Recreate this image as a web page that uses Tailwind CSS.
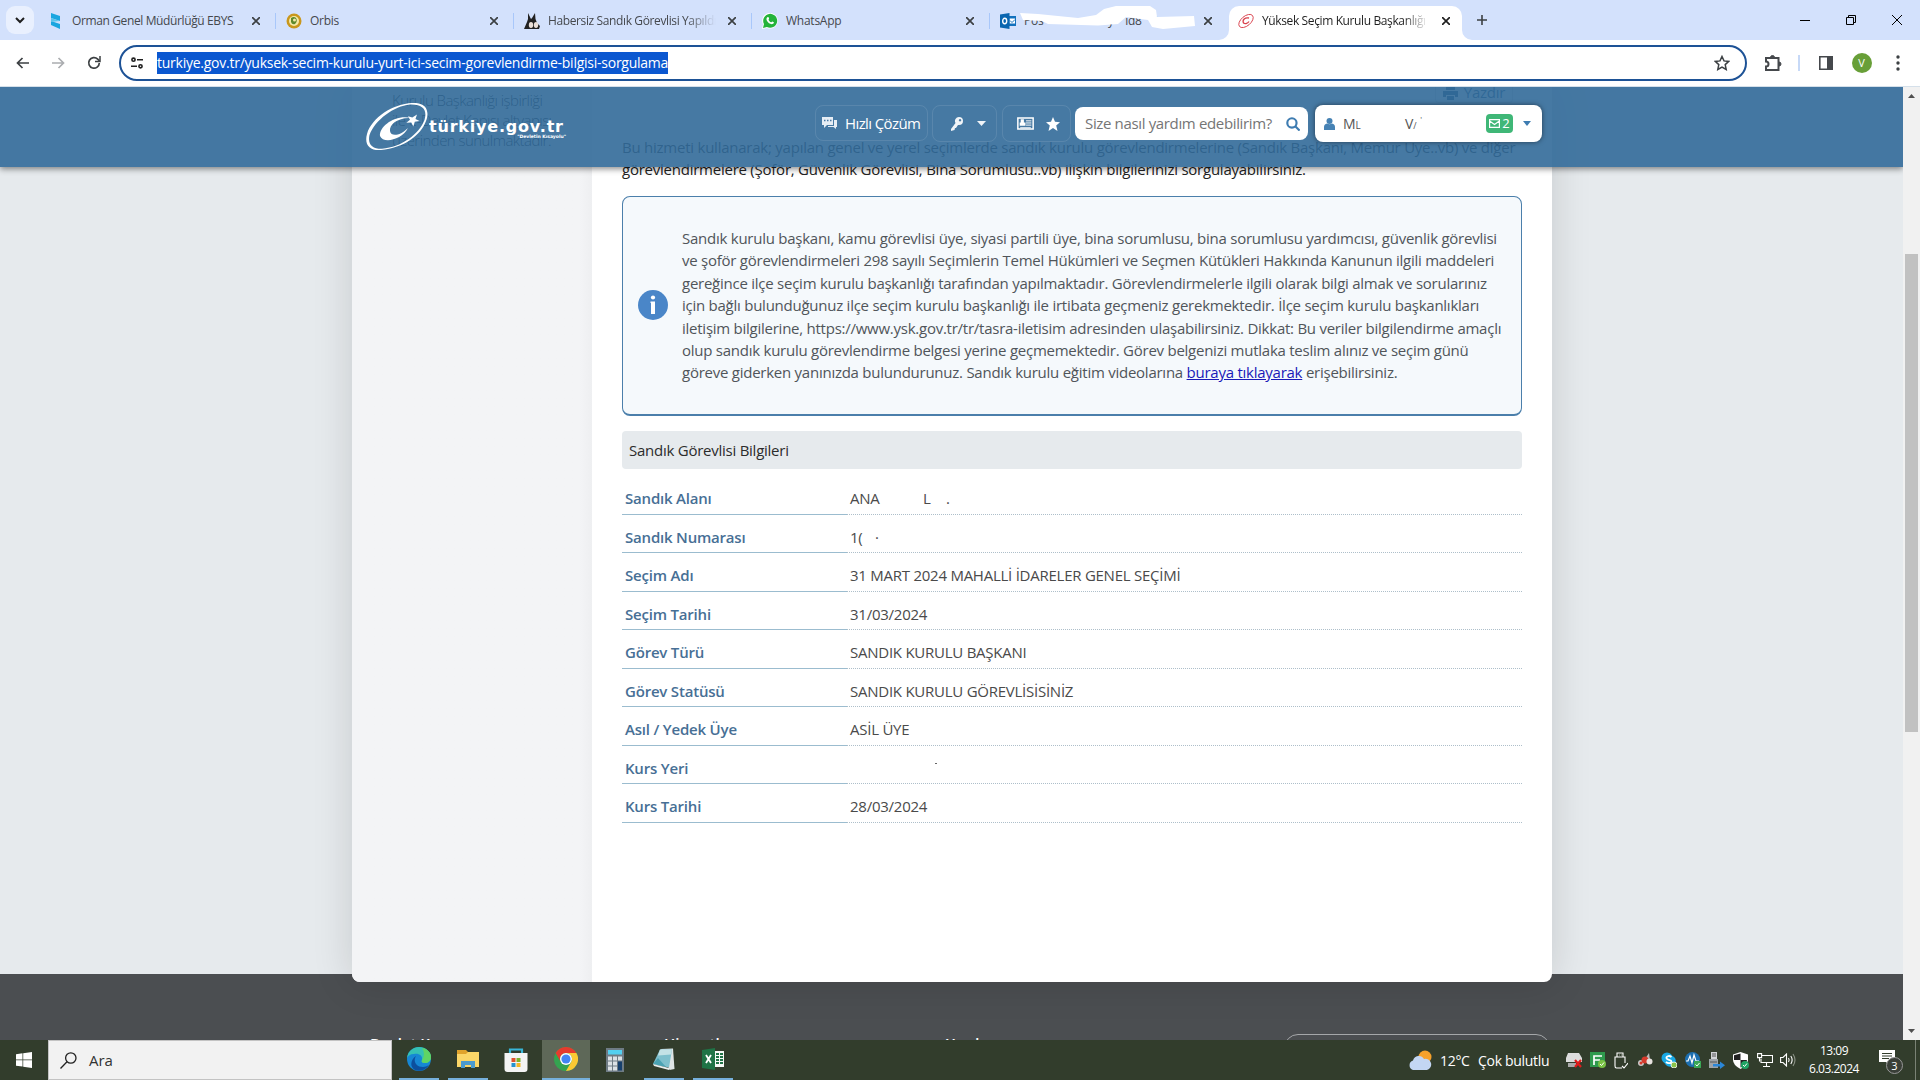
<!DOCTYPE html>
<html lang="tr">
<head>
  <meta charset="UTF-8">
  <meta name="viewport" content="width=device-width, initial-scale=1.0">
  <title>Yüksek Seçim Kurulu Başkanlığı</title>
  <script src="https://cdn.jsdelivr.net/npm/@tailwindcss/browser@4"></script>
</head>
<body class="w-[1920px] h-[1080px] overflow-hidden flex flex-col bg-white font-['Open_Sans',sans-serif]">

  <!-- Tab strip -->
  <div class="h-10 shrink-0 bg-[#d3e1fc] flex items-end pl-1.5 text-[12px] tracking-[-0.25px] text-[#45484d]">
    <div class="w-7 h-7 mb-1.5 rounded-[9px] bg-[#e9f0fe] flex items-center justify-center">
      <svg class="w-3 h-3" viewBox="0 0 12 12" fill="none" stroke="#1f1f1f" stroke-width="2"><path d="M2 4l4 4 4-4"/></svg>
    </div>
    <div class="w-[241px] h-[34px] pl-4 pr-[14px] pb-1 flex items-center">
      <svg class="w-3 h-4 mr-2.5" viewBox="0 0 12 16"><path d="M1 0l9 3v5L1 5z" fill="#1aa6e0"/><path d="M1 8l9 3v5L1 12z" fill="#1aa6e0"/><path d="M1 5l9 3-9 1z" fill="#5cc3ea"/></svg>
      <span class="flex-1 whitespace-nowrap tracking-[-0.38px]">Orman Genel Müdürlüğü EBYS</span>
      <svg class="w-2 h-2 ml-3 mr-[1px]" viewBox="0 0 8 8" stroke="#3c4043" stroke-width="1.7"><path d="M0 0l8 8M8 0L0 8"/></svg>
    </div>
    <div class="w-[238px] h-[34px] pb-1 flex items-center">
      <span class="w-[1px] h-4 bg-[#a8c7fa] mr-2.5"></span>
      <svg class="w-4 h-4 mr-2" viewBox="0 0 16 16"><circle cx="8" cy="8" r="7.5" fill="#c9971c"/><circle cx="8" cy="8" r="5" fill="#f4e9a8"/><path d="M5 5q3-2 5 0 2 3-1 6-3 1-4-2z" fill="#5d8a2c"/><circle cx="8.500" cy="7" r="1.500" fill="#f4e9a8"/></svg>
      <span class="flex-1">Orbis</span>
      <svg class="w-2 h-2 mr-[15px]" viewBox="0 0 8 8" stroke="#3c4043" stroke-width="1.7"><path d="M0 0l8 8M8 0L0 8"/></svg>
    </div>
    <div class="w-[238px] h-[34px] pb-1 flex items-center">
      <span class="w-[1px] h-4 bg-[#a8c7fa] mr-2.5"></span>
      <svg class="w-4 h-4 mr-2" viewBox="0 0 16 16"><path d="M4 0l3 6 1-1 3-5 .5 6 1.500 4 3 3-1 3H0l3-7 1-3z" fill="#222"/><ellipse cx="7" cy="12" rx="2.200" ry="3" fill="#eadfd8"/><ellipse cx="12" cy="12" rx="2.200" ry="3" fill="#eadfd8"/></svg>
      <span class="w-[168px] whitespace-nowrap overflow-hidden tracking-[-0.38px] [mask-image:linear-gradient(to_right,black_82%,transparent)]">Habersiz Sandık Görevlisi Yapıldı</span>
      <svg class="w-2 h-2 ml-3" viewBox="0 0 8 8" stroke="#3c4043" stroke-width="1.7"><path d="M0 0l8 8M8 0L0 8"/></svg>
    </div>
    <div class="w-[238px] h-[34px] pb-1 flex items-center">
      <span class="w-[1px] h-4 bg-[#a8c7fa] mr-2.5"></span>
      <svg class="w-4 h-4 mr-2" viewBox="0 0 16 16"><path d="M0 16l1-4.700A7.800 7.800 0 1 1 5 15z" fill="#fff"/><path d="M1 15l1-3.900a7 7 0 1 1 2.900 2.900z" fill="#23b33a"/><path d="M5.400 4.300c1-.7 1.300 0 1.700 1.300.1.600-.7.900-.5 1.300.7 1.200 1.400 1.800 2.500 2.300.5.100.8-1 1.200-.8 1.700.7 1.800.9 1.500 1.600-.6 1.200-2 1.400-3.500.8C6.500 10 5.300 8.700 4.700 7.200c-.4-1-.2-2.200.7-2.900z" fill="#fff"/></svg>
      <span class="flex-1">WhatsApp</span>
      <svg class="w-2 h-2 mr-[15px]" viewBox="0 0 8 8" stroke="#3c4043" stroke-width="1.7"><path d="M0 0l8 8M8 0L0 8"/></svg>
    </div>
    <div class="relative w-[240px] h-[34px] pb-1 flex items-center">
      <span class="w-[1px] h-4 bg-[#a8c7fa] mr-2.5"></span>
      <svg class="w-4 h-4 mr-2" viewBox="0 0 16 16"><path d="M8 3h8v10H8z" fill="#1271bd"/><path d="M9.500 5.500h5.500v5H9.500z" fill="#fff"/><path d="M10 7.500l2 2 3-3" stroke="#1271bd" fill="none"/><path d="M0 1.500L9.500 0v16L0 14.500z" fill="#0a66b0"/><ellipse cx="4.700" cy="8" rx="2" ry="2.700" fill="none" stroke="#fff" stroke-width="1.400"/></svg>
      <span class="w-[84px]">Pos</span>
      <span class="flex-1 whitespace-nowrap">y &nbsp; &nbsp;ıd8 &nbsp; D</span>
      <svg class="w-2 h-2 mr-[17px]" viewBox="0 0 8 8" stroke="#3c4043" stroke-width="1.7"><path d="M0 0l8 8M8 0L0 8"/></svg>
      <!-- white scribble over the title -->
      <svg class="absolute left-[29px] top-0 w-[180px] h-[25px]" viewBox="0 0 180 25"><path d="M2 7L20 8L60 12L78 9L86 3L98 0L132 0L138 4L139 11L176 10L177 20L145 23L134 21L130 14L108 11L100 18L80 19.500L30 18L24 15L5 14z" fill="#fff"/></svg>
    </div>
    <!-- active tab -->
    <div class="relative w-[233px] h-[34px] pb-1 pl-[9px] flex items-center bg-white rounded-t-[10px] text-[#1f1f1f]">
      <svg class="absolute -left-2.5 bottom-0 w-2.5 h-2.5" viewBox="0 0 10 10"><path d="M10 0v10H0A10 10 0 0 0 10 0z" fill="#fff"/></svg>
      <svg class="absolute -right-2.5 bottom-0 w-2.5 h-2.5" viewBox="0 0 10 10"><path d="M0 0v10h10A10 10 0 0 1 0 0z" fill="#fff"/></svg>
      <svg class="w-4 h-4 mr-2" viewBox="0 0 16 16" fill="none" stroke="#d9424d"><ellipse cx="8" cy="8" rx="8.500" ry="4.800" transform="rotate(-40 8 8)" stroke-width=".9"/><path d="M11 5C7 4 4 7 5.500 10c2 1.500 4.500 0 5.500-1.500" stroke-width="1.300"/></svg>
      <span class="w-[166px] whitespace-nowrap overflow-hidden tracking-[-0.38px] [mask-image:linear-gradient(to_right,black_85%,transparent)]">Yüksek Seçim Kurulu Başkanlığı</span>
      <svg class="w-2 h-2 ml-3.5" viewBox="0 0 8 8" stroke="#1f1f1f" stroke-width="1.700"><path d="M0 0l8 8M8 0L0 8"/></svg>
    </div>
    <div class="flex-1 h-10 pl-[15px] flex items-center">
      <svg class="w-2.5 h-2.5" viewBox="0 0 10 10" stroke="#3c4043" stroke-width="1.6"><path d="M5 0v10M0 5h10"/></svg>
      <svg class="w-2.5 h-2.5 ml-auto mr-9" viewBox="0 0 10 10" stroke="#000"><path d="M0 5.500h10"/></svg>
      <svg class="w-2.5 h-2.5 mr-9" viewBox="0 0 10 10" fill="none" stroke="#000"><path d="M.5 2.500h7v7h-7zM2.500 2.500v-2h7v7h-2"/></svg>
      <svg class="w-2.5 h-2.5 mr-[18px]" viewBox="0 0 10 10" stroke="#000"><path d="M0 0l10 10M10 0L0 10"/></svg>
    </div>
  </div>

  <!-- Address bar -->
  <div class="h-[47px] shrink-0 border-b border-[#d5e0ea] bg-white flex items-center pl-4 pr-5">
    <svg class="w-[13px] h-3 mr-[23px] shrink-0" viewBox="0 0 13 12" fill="none" stroke="#3c4043" stroke-width="1.700"><path d="M13 6H1.500M6.500 1l-5 5 5 5"/></svg>
    <svg class="w-[13px] h-3 mr-[22px] shrink-0" viewBox="0 0 13 12" fill="none" stroke="#abadb0" stroke-width="1.700"><path d="M0 6h11.500M6.500 1l5 5-5 5"/></svg>
    <svg class="w-[14px] h-[14px] mr-[18px] shrink-0" viewBox="0 0 14 14" fill="none" stroke="#3c4043" stroke-width="1.700"><path d="M12.300 7a5.300 5.300 0 1 1-1.600-3.900L12.500 5"/><path d="M13 0v5.500H8" stroke-width="1.500"/></svg>
    <div class="w-[1628px] shrink-0 h-9 rounded-full border-2 border-[#1d5296] flex items-center pl-2.5 pr-[15px]">
      <svg class="w-3 h-3 mr-3.5" viewBox="0 0 12 12" fill="none" stroke="#1f1f1f" stroke-width="1.600"><circle cx="2.500" cy="2.700" r="1.600"/><path d="M6 2.700h6M0 9.300h6"/><circle cx="9.500" cy="9.300" r="1.600"/></svg>
      <span class="h-[22px] leading-[22px] bg-[#0b57d0] text-white text-[14px] tracking-[-0.25px] whitespace-nowrap">turkiye.gov.tr/yuksek-secim-kurulu-yurt-ici-secim-gorevlendirme-bilgisi-sorgulama</span>
      <svg class="w-4 h-4 ml-auto" viewBox="0 0 16 16" fill="none" stroke="#3c4043" stroke-width="1.500"><path d="M8 1.500l2 4.400 4.800.5-3.600 3.200 1 4.800L8 12l-4.200 2.400 1-4.800L1.200 6.400 6 5.900z"/></svg>
    </div>
    <svg class="w-[18px] h-[18px] ml-[17px]" viewBox="0 0 18 18" fill="none" stroke="#45484c" stroke-width="2"><path d="M2 4h12.500v12H2v-3.500a2.500 2.500 0 0 0 0-5z"/><path d="M6.500 3.500a2 2 0 0 1 4 0zM15 8a2 2 0 0 1 0 4z" fill="#45484c" stroke-width="1"/></svg>
    <span class="w-[1.500px] h-4 ml-4 bg-[#c7d9f7]"></span>
    <svg class="w-4 h-4 ml-[18px]" viewBox="0 0 16 16"><path d="M1.800 1.800h12.400v12.400H1.800z" fill="none" stroke="#45484c" stroke-width="1.600"/><path d="M9 1h6v14H9z" fill="#45484c"/></svg>
    <span class="w-5 h-5 ml-[18px] rounded-full bg-[#689f38] text-white text-[11px] flex items-center justify-center">V</span>
    <svg class="w-1 h-4 ml-auto" viewBox="0 0 4 16" fill="#3c4043"><circle cx="2" cy="2" r="1.700"/><circle cx="2" cy="8" r="1.700"/><circle cx="2" cy="14" r="1.700"/></svg>
  </div>

  <!-- Page -->
  <div class="flex h-[953px] shrink-0">
    <div class="relative w-[1903px] h-[953px] overflow-hidden bg-[#e6eaed]">
      <div class="absolute inset-x-0 bottom-0 h-[66px] bg-[#4b4e51]"></div>

      <div class="relative w-[1200px] h-[895px] ml-[352px] rounded-b-lg overflow-visible shadow-[0_0_40px_rgba(0,0,0,0.14)] flex bg-white">
        <aside class="w-60 shrink-0 rounded-bl-lg bg-gradient-to-r from-[#f3f4f6] from-95% to-[#eeeff1] pl-10 pt-[3px] text-[15px] leading-5 font-light tracking-[-0.55px] text-black">
          <p class="w-[180px]">Kurulu Başkanlığı işbirliği<br>ile e-Devlet Kapısı altyapısı<br>üzerinden sunulmaktadır.</p>
        </aside>

        <main class="w-[900px] ml-[30px] tracking-[-0.25px]">
          <div class="h-4 ml-auto mr-[9px] w-[78px] border-x border-b border-[#ddd] rounded-b flex items-center justify-center gap-1.5 pb-1 text-[15px] text-[#24567f]">
            <svg class="w-[15px] h-3.5" viewBox="0 0 15 14" fill="#24567f"><path d="M3 0h9v4H3zM0 5h15v6h-3V9H3v2H0zM4 10h7v4H4z"/></svg>
            <span>Yazdır</span>
          </div>
          <p class="mt-[33px] text-[15px] leading-[22.4px] text-[#222] whitespace-nowrap tracking-[-0.24px]">Bu hizmeti kullanarak; yapılan genel ve yerel seçimlerde sandık kurulu görevlendirmelerine (Sandık Başkanı, Memur Üye..vb) ve diğer<br>görevlendirmelere (Şoför, Güvenlik Görevlisi, Bina Sorumlusu..vb) ilişkin bilgilerinizi sorgulayabilirsiniz.</p>

          <div class="mt-[15px] h-[220px] rounded-lg border border-b-2 border-[#4b7fab] bg-[#f5f9fc] flex items-center pl-[15px]">
            <svg class="w-[30px] h-[30px] mr-3.5 shrink-0" viewBox="0 0 30 30"><circle cx="15" cy="15" r="15" fill="#4a86c8"/><circle cx="15" cy="7.500" r="2.100" fill="#fff"/><path d="M12.500 11.500H17V24h-4V13h-.5z" fill="#fff"/></svg>
            <p class="text-[15px] leading-[22.4px] text-[#50555a] whitespace-nowrap">Sandık kurulu başkanı, kamu görevlisi üye, siyasi partili üye, bina sorumlusu, bina sorumlusu yardımcısı, güvenlik görevlisi<br>ve şoför görevlendirmeleri 298 sayılı Seçimlerin Temel Hükümleri ve Seçmen Kütükleri Hakkında Kanunun ilgili maddeleri<br>gereğince ilçe seçim kurulu başkanlığı tarafından yapılmaktadır. Görevlendirmelerle ilgili olarak bilgi almak ve sorularınız<br>için bağlı bulunduğunuz ilçe seçim kurulu başkanlığı ile irtibata geçmeniz gerekmektedir. İlçe seçim kurulu başkanlıkları<br>iletişim bilgilerine, https://www.ysk.gov.tr/tr/tasra-iletisim adresinden ulaşabilirsiniz. Dikkat: Bu veriler bilgilendirme amaçlı<br>olup sandık kurulu görevlendirme belgesi yerine geçmemektedir. Görev belgenizi mutlaka teslim alınız ve seçim günü<br>göreve giderken yanınızda bulundurunuz. Sandık kurulu eğitim videolarına <a href="#" class="underline text-[#1a1ab8]">buraya tıklayarak</a> erişebilirsiniz.</p>
          </div>

          <h2 class="mt-[15px] h-[38px] rounded bg-[#e6eaed] px-[7px] text-[15px] leading-[38px] text-[#2c2c2c]">Sandık Görevlisi Bilgileri</h2>

          <dl class="mt-[7.6px] grid grid-cols-[225px_1fr] auto-rows-[38.5px] text-[15px] leading-[44px] text-[#4a4a4a] [&>dt]:font-semibold [&>dt]:tracking-[-0.2px] [&>dt]:text-[#476f95] [&>dt]:pl-[3px] [&>dt]:border-b [&>dt]:border-[#9bbccf] [&>dd]:pl-[3px] [&>dd]:border-b [&>dd]:border-dotted [&>dd]:border-[#aebfca]">
            <dt>Sandık Alanı</dt><dd class="flex"><span class="w-[73px]">ANA</span><span class="w-[23px]">L</span><span>.</span></dd>
            <dt>Sandık Numarası</dt><dd class="flex"><span class="w-[25px]">1(</span><span>·</span></dd>
            <dt>Seçim Adı</dt><dd>31 MART 2024 MAHALLİ İDARELER GENEL SEÇİMİ</dd>
            <dt>Seçim Tarihi</dt><dd>31/03/2024</dd>
            <dt>Görev Türü</dt><dd>SANDIK KURULU BAŞKANI</dd>
            <dt>Görev Statüsü</dt><dd>SANDIK KURULU GÖREVLİSİSİNİZ</dd>
            <dt>Asıl / Yedek Üye</dt><dd>ASİL ÜYE</dd>
            <dt>Kurs Yeri</dt><dd class="flex"><span class="ml-[85px] mt-[17px] w-0.5 h-[1px] bg-[#666]"></span></dd>
            <dt>Kurs Tarihi</dt><dd>28/03/2024</dd>
          </dl>
        </main>
      </div>

      <!-- Footer, only its top edge is on screen -->
      <div class="relative ml-[370px] mt-[52px] h-6 flex text-[15px] leading-5 font-semibold text-white">
        <span class="w-[294px] -mt-[1px]">Devlet K</span>
        <span class="w-[282px] -mt-[1px]">Hizmetler</span>
        <span class="-mt-[1px]">Yardım</span>
        <span class="absolute left-[914px] top-0 w-[266px] h-10 rounded-[14px] border border-[#a5a7a9]"></span>
      </div>

      <!-- Site header -->
      <header class="absolute inset-x-0 top-0 h-20 bg-[#326a99]/90 shadow-[0_2px_6px_rgba(0,0,0,0.45)] flex items-center pl-[366px] text-white">
        <svg class="w-[62px] h-12 mt-[-1px]" viewBox="0 0 62 48"><path fill-rule="evenodd" fill="#fff" d="M46 0C60-1 64 8 60 18C55 32 38 45 15 47C4 48-2 42 1 31C6 14 27 1 46 0zM44 1.500C28 3 9 17 3.500 32C1.500 41 6 46 16 45.800C36 44 53 31 58.500 17C61.500 7 57 1 44 1.500z"/><path fill="#fff" d="M45 15C30 11 13 23 14 33C17 41 36 37 42 25C34 33 25 34 24 28C23 21 33 14 45 15z"/><path fill="#fff" d="M51 11.500l-1.500 4.500 4 2-4.700.8-1.500 4.700-2-4-5 .3 3.700-3-2-3.500 4.300 1.100z"/></svg>
        <div class="w-[137px] ml-[1px] mt-[3px] font-['DejaVu_Sans',sans-serif]">
          <div class="text-[16px] leading-4 font-bold tracking-[0.8px] whitespace-nowrap">türkiye.gov.tr</div>
          <div class="text-right text-[4.500px] leading-[5px] font-bold -mt-[1px]">"Devletin Kısayolu"</div>
        </div>
        <div class="ml-[249px] w-[113px] h-9 mt-[-8px] rounded-lg border border-white/10 flex items-center pl-1.5 text-[15px] tracking-[-0.6px]">
          <svg class="w-[15px] h-3 mr-2" viewBox="0 0 15 12" fill="#e6edf4"><path d="M0 0h11v8H5L2 11V8H0z"/><path d="M12 3h3v7h-1v2l-2.500-2H6V9h6z"/><path d="M2 3.500h1.500M5 3.500h1.500M8 3.500h1.500" stroke="#4577a3" stroke-width="1.400"/></svg>
          <span class="whitespace-nowrap">Hızlı Çözüm</span>
        </div>
        <div class="ml-1 w-[65px] h-[37px] -mt-[7px] rounded-lg border border-white/10 flex items-center justify-end pr-2.5 gap-3.5">
          <svg class="w-3 h-3.5" viewBox="0 0 12 14"><path fill-rule="evenodd" fill="#f0f4f8" d="M8 0a4 4 0 0 1 0 8L7 8 5 11 4 11 3.500 13 0 14 0 12 4.500 6A4 4 0 0 1 8 0zM9 2a1.200 1.200 0 1 0 .1 0z"/></svg>
          <svg class="w-[9px] h-[5px]" viewBox="0 0 9 5" fill="#f0f4f8"><path d="M0 0h9L4.500 5z"/></svg>
        </div>
        <div class="ml-[5px] w-[69px] h-[37px] -mt-[7px] rounded-lg border border-white/10 flex items-center pl-3.5 gap-3">
          <svg class="w-[17px] h-[13px]" viewBox="0 0 16 12" fill="none" stroke="#fff"><path d="M.8.800h14.400v10.400H.8z" stroke-width="1.400"/><path d="M8.500 3.500h5M8.500 5.500h5M8.500 7.500h5M3 10h10" stroke-width=".9"/><path d="M3.500 2h3v3H8v3H2.500V5h1z" fill="#fff" stroke="none"/></svg>
          <svg class="w-3.5 h-3.5" viewBox="0 0 14 14" fill="#fff"><path d="M7 0l2 4.800 5 .4-3.800 3.300 1.300 5.500L7 11l-4.500 3 1.300-5.500L0 5.200l5-.4z"/></svg>
        </div>
        <div class="ml-1 w-[233px] h-[33px] -mt-[7px] rounded-lg bg-white flex items-center pl-2.5 pr-2 text-[15px] tracking-[-0.35px] text-[#757575] whitespace-nowrap">
          <span>Size nasıl yardım edebilirim?</span>
          <svg class="w-[14px] h-[14px] ml-auto" viewBox="0 0 13 13" fill="none" stroke="#3e7cb1" stroke-width="2"><circle cx="5.500" cy="5.500" r="4.300"/><path d="M8.600 8.600l4 4"/></svg>
        </div>
        <div class="ml-[7px] w-[227px] h-[37px] -mt-[7px] rounded-lg bg-white shadow-[0_0_5px_rgba(0,0,0,0.5)] flex items-center pl-[9px] pr-[11px] text-[14px] text-[#555]">
          <svg class="w-[11px] h-3" viewBox="0 0 11 12" fill="#4682b4"><circle cx="5.500" cy="3" r="3"/><path d="M0 12V9q0-3 3-3.500 2.500 1.500 5 0Q11 6 11 9v3z"/></svg>
          <span class="ml-2 w-[62px]">M<span class="text-[10px]">L</span></span><span>V<span class="text-[9px]">/</span>&nbsp;<span class="text-[8px] align-top">'</span></span>
          <span class="ml-auto w-[27px] h-[19px] rounded-sm bg-[#3fb777] text-white flex items-center justify-center gap-0.5 text-[13px]">
            <svg class="w-[11px] h-[9px]" viewBox="0 0 11 9" fill="none" stroke="#fff" stroke-width="1.200"><path d="M.6.600h9.800v7.800H.6zM.6 2l4.900 3.500L10.400 2"/></svg>2
          </span>
          <svg class="w-2 h-[5px] ml-2.5" viewBox="0 0 8 5" fill="#3e7cb1"><path d="M0 0h8L4 5z"/></svg>
        </div>
      </header>
    </div>

    <!-- Scrollbar -->
    <div class="w-[17px] bg-[#f1f1f1] flex flex-col items-center">
      <svg class="w-[7px] h-1 mt-[7px]" viewBox="0 0 7 4" fill="#505050"><path d="M0 4h7L3.500 0z"/></svg>
      <div class="w-[13px] h-[478px] mt-[156px] bg-[#c1c1c1]"></div>
      <svg class="w-[7px] h-1 mt-auto mb-[7px]" viewBox="0 0 7 4" fill="#505050"><path d="M0 0h7L3.500 4z"/></svg>
    </div>
  </div>

  <!-- Taskbar -->
  <div class="h-10 shrink-0 flex bg-[#323d2c] text-white">
    <div class="w-12 flex items-center justify-center">
      <svg class="w-4 h-4" viewBox="0 0 16 16" fill="#fff"><path d="M0 2.200l6.500-.9v6.200H0zM7.200 1.200L16 0v7.500H7.200zM0 8.300h6.500v6.200L0 13.700zM7.200 8.300H16V16l-8.800-1.200z"/></svg>
    </div>
    <div class="w-[344px] bg-[#f2f2f2] border border-[#c3c3c3] flex items-center pl-[11px] text-[15px] text-[#333]">
      <svg class="w-[17px] h-[17px] mr-3" viewBox="0 0 17 17" fill="none" stroke="#222" stroke-width="1.300"><circle cx="10.800" cy="6" r="5.200"/><path d="M7 9.800L.5 16.500"/></svg>
      <span>Ara</span>
    </div>
    <div class="flex ml-[7px]">
      <div class="w-10 mr-[9px] flex justify-center items-center border-b-2 border-[#76b0dc]">
        <svg class="w-6 h-6" viewBox="0 0 24 24"><circle cx="12" cy="12" r="12" fill="#1687d4"/><path d="M0 11C1 4 6 0 12 0c7 0 12 5 12 10 0 4-3 6-6 6s-4-1-3-3c1-5-4-7-8-6-4 0-6 2-7 4z" fill="#35c1b4"/><path d="M15 1c6 1 9 5 9 9 0 4-3 6-6 6s-4-1-3-3c3-4 2-9 0-12z" fill="#5fd464"/><path d="M9 9c-3 4-1 11 7 11 2 0 4-1 6-2-3 5-9 7-14 5C2 20 4 12 9 9z" fill="#0c4f9e"/></svg>
      </div>
      <div class="w-10 flex justify-center items-center border-b-2 border-[#76b0dc]">
        <svg class="w-[22px] h-[18px]" viewBox="0 0 22 18"><path d="M0 0h9l2 2h11v15H0z" fill="#e0a32c"/><path d="M0 4h9l2-2h11v15H0z" fill="#fbd668"/><path d="M4 18v-7h14v7h-4v-3H8v3z" fill="#4b9bd0"/></svg>
      </div>
      <div class="w-[54px] pl-0.5 flex justify-center items-center">
        <svg class="w-6 h-6" viewBox="0 0 24 24"><path d="M6 6V1.500h12V6" fill="none" stroke="#38b6d8" stroke-width="2.200"/><path d="M.5 5h23v16a3 3 0 0 1-3 3h-17a3 3 0 0 1-3-3z" fill="#f4f4f4"/><path d="M7.500 10h4v4h-4z" fill="#e0522d"/><path d="M12.500 10h4v4h-4z" fill="#7db32b"/><path d="M7.500 15h4v4h-4z" fill="#2792d0"/><path d="M12.500 15h4v4h-4z" fill="#f5b625"/></svg>
      </div>
      <div class="w-12 flex justify-center items-center border-b-2 border-[#76b0dc] bg-[#5e6858]">
        <svg class="w-6 h-6" viewBox="0 0 24 24"><circle cx="12" cy="12" r="12" fill="#34a350"/><path d="M1.600 6A12 12 0 0 1 22.400 6H12a6 6 0 0 0-5.200 9z" fill="#e53b2e"/><path d="M22.400 6A12 12 0 0 1 12 24l5.200-9A6 6 0 0 0 12 6z" fill="#fcc934"/><circle cx="12" cy="12" r="6" fill="#fff"/><circle cx="12" cy="12" r="4.600" fill="#4285f4"/></svg>
      </div>
      <div class="w-[50px] flex justify-center items-center">
        <svg class="w-[18px] h-6" viewBox="0 0 18 24"><path d="M0 0h18v24H0z" fill="#6e7b84"/><path d="M2 2h14v4.500H2z" fill="#53d0f0"/><path d="M2 8.500h4v4H2zM7 8.500h4v4H7zM12 8.500h4v4h-4zM2 13.500h4v4H2zM7 13.500h4v4H7zM2 18.500h4v4H2zM7 18.500h4v4H7z" fill="#dce1e5"/><path d="M12 13.500h4v9h-4z" fill="#17406d"/></svg>
      </div>
      <div class="w-10 ml-1 flex justify-center items-center border-b-2 border-[#76b0dc]">
        <svg class="w-[22px] h-[22px]" viewBox="0 0 22 22"><path d="M8 1l12-.5 1.500 20.500-5 1z" fill="#dfe5e6"/><path d="M7 1.500l12 0-3 18L0 16z" fill="#7fc0cd"/><path d="M7 1.500h12l-1 5-13 1z" fill="#c4e2e6"/><path d="M5 10l8 9-13-3z" fill="#4ba3b4"/><path d="M0 16l16 4v2L1 18z" fill="#e9eeee"/></svg>
      </div>
      <div class="w-10 ml-[9px] flex justify-center items-center border-b-2 border-[#76b0dc]">
        <svg class="w-[22px] h-[22px]" viewBox="0 0 22 22"><path d="M12 3h10v16H12z" fill="#f6faf7"/><path d="M14 5h3v2h-3zM18 5h3v2h-3zM14 8h3v2h-3zM18 8h3v2h-3zM14 11h3v2h-3zM18 11h3v2h-3zM14 14h3v2h-3zM18 14h3v2h-3z" fill="#1f7346"/><path d="M0 2l13-2v22L0 20z" fill="#1f7346"/><path d="M4 7l5 8M9 7l-5 8" stroke="#fff" stroke-width="1.800"/></svg>
      </div>
    </div>

    <!-- Tray -->
    <div class="ml-auto flex items-center">
      <svg class="w-6 h-[21px] mr-2" viewBox="0 0 24 21"><circle cx="17" cy="7" r="6.500" fill="#f6a12b"/><path d="M5 20a5 5 0 0 1 0-9.500A6 6 0 0 1 16 9a5 5 0 0 1 3 11z" fill="#c3d6f3"/></svg>
      <span class="w-[38px] text-[14px] tracking-[-0.3px]">12°C</span>
      <span class="w-[88px] text-[14px] tracking-[-0.3px] whitespace-nowrap">Çok bulutlu</span>
      <svg class="w-4 h-4 mr-2" viewBox="0 0 16 16"><path d="M2 1h11l3 5v4H0V6z" fill="#ddd"/><path d="M2 11h8v4H2z" fill="#aaa"/><path d="M9 8l6 7M15 8l-6 7" stroke="#e21b1b" stroke-width="2.200"/></svg>
      <svg class="w-4 h-4 mr-2" viewBox="0 0 16 16"><path d="M0 0h15v15H0z" fill="#2f9a4d"/><path d="M4 13V4h8M4 8h6" stroke="#fff" stroke-width="1.700" fill="none"/><circle cx="12" cy="12" r="4" fill="#79c143"/><path d="M10 12l1.500 1.500L14 10.500" stroke="#fff" fill="none"/></svg>
      <svg class="w-3.5 h-[17px] mr-[9px]" viewBox="0 0 14 17" fill="none" stroke="#fff" stroke-width="1.100"><path d="M3 5V1h6v4M8 16H2.500Q1 16 1 14V5h10v6M8 14l2 2 4-5M5 3h.5M7 3h.5"/></svg>
      <svg class="w-4 h-4 mr-2" viewBox="0 0 16 16"><path d="M8 7l4-6 1 7z" fill="#bbb"/><circle cx="4" cy="11" r="3" fill="#c9c9c9"/><circle cx="8" cy="8" r="3.500" fill="#d63a2c"/><circle cx="12.500" cy="9.500" r="3" fill="#e8e3e0"/><circle cx="4" cy="11" r="1.500" fill="#d63a2c"/></svg>
      <svg class="w-4 h-4 mr-2" viewBox="0 0 16 16"><circle cx="6" cy="6" r="5.500" fill="#19a9e5"/><circle cx="9" cy="9" r="5.800" fill="#19a9e5"/><path d="M10.500 5C8 3 5 4.500 5.500 6.300c.5 1.800 5 1.200 5 3.200 0 2.200-4 2.200-5.500.4" fill="none" stroke="#fff" stroke-width="1.800"/><circle cx="13" cy="13" r="3" fill="#8bc34a" stroke="#fff" stroke-width=".8"/></svg>
      <svg class="w-4 h-4 mr-[7px]" viewBox="0 0 16 16"><circle cx="7.500" cy="7.500" r="7.500" fill="#1c6fb0"/><path d="M1 9h2l2-5 2 7 2-8 2 6h3" stroke="#fff" fill="none" stroke-width="1.200"/><path d="M9 9h7v7H9z" fill="#3aa655"/><path d="M10.500 12.500l1.500 1.500 2.500-3" stroke="#fff" fill="none"/></svg>
      <svg class="w-[17px] h-[17px] mr-2" viewBox="0 0 17 17"><path d="M3 0h6v7H3z" fill="#d0d3d6"/><path d="M1 7h9v9H1z" fill="#9ea4a9"/><path d="M4 2h4M4 4h4M2 10h7" stroke="#555"/><path d="M5 12h7v-2.500l5 3.700-5 3.700V14.500H5z" fill="#2b87d8"/></svg>
      <svg class="w-4 h-[17px] mr-2" viewBox="0 0 16 17"><path d="M7.500 0L15 2.500V8q0 5-7.500 9Q0 13 0 8V2.500z" fill="#fff"/><path d="M7.500 1.500V8H1V3.300zM7.500 8H14q-.5 4-6.500 7.500z" fill="#222"/><circle cx="12" cy="13" r="4" fill="#1fa463"/><path d="M10 13l1.500 1.500L14 11.500" stroke="#fff" fill="none"/></svg>
      <svg class="w-4 h-3.5 mr-[7px]" viewBox="0 0 16 14" fill="none" stroke="#fff" stroke-width="1.100"><path d="M5 2.500h10.500v7H4V6M9.500 9.500v4M6 13.500h7M.6.600h4v4h-4zM2.500 4.600v4"/></svg>
      <svg class="w-4 h-3.5 mr-3" viewBox="0 0 16 14" fill="none" stroke="#fff" stroke-width="1.100"><path d="M.6 4.500H3L6.500 1v12L3 9.500H.6z"/><path d="M8.500 5q1.300 2 0 4M10.800 3q2.700 4 0 8"/><path d="M13 1q4 6 0 12" stroke="#8b9285"/></svg>
      <div class="w-[52px] mr-[19px] text-center text-[12px] leading-[18px] tracking-[-0.5px]">13:09<br>6.03.2024</div>
      <div class="relative w-6 h-6 mr-3">
        <svg class="w-4 h-4 mt-0.5" viewBox="0 0 16 16"><path d="M0 0h16v12h-5v4l-4-4H0z" fill="#fff"/><path d="M3 3.500h10M3 6h10M3 8.500h7" stroke="#323d2c"/></svg>
        <span class="absolute left-[7px] top-[9px] w-[17px] h-[17px] rounded-full border border-[#999] bg-[#3a3f38] text-[11px] leading-[15px] text-center">3</span>
      </div>
      <span class="w-[1px] h-10 bg-[#7a8275] mr-1"></span>
    </div>
  </div>
</body>
</html>
